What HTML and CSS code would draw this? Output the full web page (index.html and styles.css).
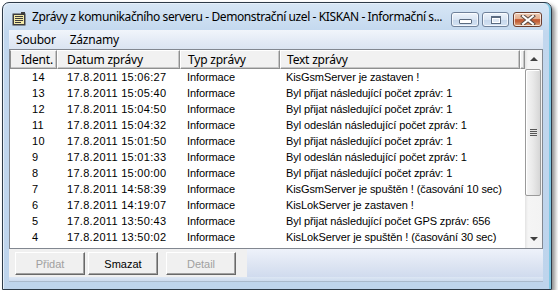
FILE: index.html
```html
<!DOCTYPE html>
<html>
<head>
<meta charset="UTF-8">
<title>Zprávy z komunikačního serveru</title>
<link rel="stylesheet" href="styles.css">
</head>
<body>
	<div class="window">
		<div class="titlebar">
			<svg class="app-icon" width="14" height="14" viewBox="0 0 14 14">
				<rect x="0.5" y="1.5" width="13" height="12" fill="#3d3d3d"/>
				<rect x="2" y="3" width="10" height="9" fill="#f3e9a6"/>
				<rect x="3" y="4" width="8" height="1" fill="#3d3d3d"/>
				<rect x="3" y="6" width="8" height="1" fill="#3d3d3d"/>
				<rect x="3" y="8" width="8" height="1" fill="#3d3d3d"/>
				<rect x="3" y="10" width="6" height="1" fill="#3d3d3d"/>
				<rect x="9" y="0" width="4" height="2" fill="#3d3d3d"/>
			</svg>
			<span class="title">Zprávy z komunikačního serveru - Demonstrační uzel - KISKAN - Informační s...</span>
			<div class="caption">
				<div class="cap-btn cap-min"><span class="min-glyph"></span></div>
				<div class="cap-btn cap-max"><span class="max-glyph"></span></div>
				<div class="cap-btn cap-close">
					<svg width="16" height="10" viewBox="0 0 16 10">
						<path d="M3 1 L13 9 M13 1 L3 9" stroke="#5a4a44" stroke-width="4" stroke-linecap="square"/>
						<path d="M3 1 L13 9 M13 1 L3 9" stroke="#ffffff" stroke-width="2" stroke-linecap="square"/>
					</svg>
				</div>
			</div>
		</div>

		<div class="client">
			<div class="menubar">
				<span class="menu-item">Soubor</span>
				<span class="menu-item">Záznamy</span>
			</div>

			<div class="listview">
				<div class="lv-main">
					<div class="lv-header">
						<div class="hcell c-id">Ident.</div>
						<div class="hcell c-date">Datum zprávy</div>
						<div class="hcell c-type">Typ zprávy</div>
						<div class="hcell c-text">Text zprávy</div>
						<div class="hcell c-fill"></div>
					</div>
					<div class="lv-rows">
						<div class="row"><span class="c-id">14</span><span class="c-date">17.8.2011 15:06:27</span><span class="c-type">Informace</span><span class="c-text">KisGsmServer je zastaven !</span></div>
						<div class="row"><span class="c-id">13</span><span class="c-date">17.8.2011 15:05:40</span><span class="c-type">Informace</span><span class="c-text">Byl přijat následující počet zpráv: 1</span></div>
						<div class="row"><span class="c-id">12</span><span class="c-date">17.8.2011 15:04:50</span><span class="c-type">Informace</span><span class="c-text">Byl přijat následující počet zpráv: 1</span></div>
						<div class="row"><span class="c-id">11</span><span class="c-date">17.8.2011 15:04:32</span><span class="c-type">Informace</span><span class="c-text">Byl odeslán následující počet zpráv: 1</span></div>
						<div class="row"><span class="c-id">10</span><span class="c-date">17.8.2011 15:01:50</span><span class="c-type">Informace</span><span class="c-text">Byl přijat následující počet zpráv: 1</span></div>
						<div class="row"><span class="c-id">9</span><span class="c-date">17.8.2011 15:01:33</span><span class="c-type">Informace</span><span class="c-text">Byl odeslán následující počet zpráv: 1</span></div>
						<div class="row"><span class="c-id">8</span><span class="c-date">17.8.2011 15:00:00</span><span class="c-type">Informace</span><span class="c-text">Byl přijat následující počet zpráv: 1</span></div>
						<div class="row"><span class="c-id">7</span><span class="c-date">17.8.2011 14:58:39</span><span class="c-type">Informace</span><span class="c-text">KisGsmServer je spuštěn ! (časování 10 sec)</span></div>
						<div class="row"><span class="c-id">6</span><span class="c-date">17.8.2011 14:19:07</span><span class="c-type">Informace</span><span class="c-text">KisLokServer je zastaven !</span></div>
						<div class="row"><span class="c-id">5</span><span class="c-date">17.8.2011 13:50:43</span><span class="c-type">Informace</span><span class="c-text">Byl přijat následující počet GPS zpráv: 656</span></div>
						<div class="row"><span class="c-id">4</span><span class="c-date">17.8.2011 13:50:02</span><span class="c-type">Informace</span><span class="c-text">KisLokServer je spuštěn ! (časování 30 sec)</span></div>
					</div>
				</div>
				<div class="scrollbar">
					<div class="sb-btn"><span class="arrow-up"></span></div>
					<div class="sb-track">
						<div class="sb-thumb">
							<span class="grip"></span>
						</div>
					</div>
					<div class="sb-btn"><span class="arrow-down"></span></div>
				</div>
			</div>

			<div class="toolbar">
				<button class="btn" disabled>Přidat</button>
				<button class="btn">Smazat</button>
				<button class="btn btn-gap" disabled>Detail</button>
				<div class="toolbar-fill"></div>
			</div>
			<div class="status-strip"></div>
		</div>
	</div>
</body>
</html>
```

FILE: styles.css
```css
/* okno */
body {
	margin: 0;
	background: #ffffff;
}

.window {
	box-sizing: border-box;
	width: 550px;
	height: 288px;
	margin: 2px 0 0 2px;
	padding: 0 8px 7px 6px;
	display: flex;
	flex-direction: column;
	border: 1px solid #2d3a48;
	border-radius: 7px 7px 0 0;
	background: linear-gradient(#d7e6f5, #c2d7ee 30px, #bed4ec);
	box-shadow: inset -2px 0 0 #7fc7e3, inset 1px 1px 0 #e6f0fa, 3px 3px 4px rgba(0, 0, 0, 0.45);
}

/* titulek */
.titlebar {
	height: 27px;
	display: flex;
	align-items: flex-start;
	padding: 0 1px 0 3px;
}

.app-icon {
	margin-top: 9px;
	margin-right: 6px;
	flex: none;
}

.title {
	flex: 1;
	margin-top: 6px;
	font-family: "Noto Sans", sans-serif;
	font-size: 12px;
	line-height: 16px;
	color: #000000;
	white-space: nowrap;
	overflow: hidden;
	letter-spacing: -0.4px;
}

.caption {
	display: flex;
	margin-top: 9px;
}

.cap-btn {
	box-sizing: border-box;
	height: 15px;
	border: 1px solid #6f819a;
	border-radius: 3px;
	display: flex;
	align-items: center;
	justify-content: center;
	background: linear-gradient(#eef4fb, #d9e5f3 50%, #c6d7ec 51%, #d3e2f3);
	box-shadow: inset 0 0 0 1px rgba(255, 255, 255, 0.7);
}

.cap-min {
	width: 28px;
	margin-right: 3px;
}

.cap-max {
	width: 27px;
	margin-right: 4px;
}

.cap-close {
	width: 29px;
	border-color: #6b3d2e;
	background: linear-gradient(#eecbb4, #e2ae8e 45%, #c9633c 50%, #bf5a34 62%, #e0a97e);
}

.min-glyph {
	width: 11px;
	height: 3px;
	margin-top: 4px;
	background: #ffffff;
	border: 1px solid #5b6b80;
	border-radius: 1px;
}

.max-glyph {
	width: 8px;
	height: 5px;
	border: 1px solid #5b6b80;
	border-top-width: 2px;
	background: #dfe8f3;
	box-shadow: inset 0 0 0 1px #ffffff;
}

/* obsah okna */
.client {
	flex: 1;
	display: flex;
	flex-direction: column;
	background: #f0f0f0;
}

.menubar {
	height: 19px;
	display: flex;
	align-items: center;
	padding-left: 7px;
	background: linear-gradient(#f1f5fb, #e3eaf5 60%, #dbe4f1);
	font-family: "Noto Sans", sans-serif;
	font-size: 12px;
	letter-spacing: -0.2px;
}

.menu-item {
	margin-right: 14px;
}

/* seznam zprav */
.listview {
	height: 200px;
	box-sizing: border-box;
	display: flex;
	border: 1px solid #828790;
	background: #ffffff;
}

.lv-main {
	flex: 1;
	display: flex;
	flex-direction: column;
}

.lv-header {
	height: 19px;
	display: flex;
}

.hcell {
	box-sizing: border-box;
	height: 19px;
	padding-top: 1px;
	background: #f1f1f1;
	border: 1px solid #8e8f8f;
	border-left-color: #ffffff;
	border-top-color: #ffffff;
	box-shadow: inset -1px -1px 0 #c6c6c6;
	font-family: "Noto Sans", sans-serif;
	font-size: 12px;
	line-height: 15px;
	letter-spacing: -0.2px;
	white-space: nowrap;
	overflow: hidden;
}

.lv-header .c-id { width: 47px; padding-left: 10px; border-left: 1px solid #8e8f8f; }
.lv-header .c-date { width: 123px; padding-left: 9px; }
.lv-header .c-type { width: 100px; padding-left: 7px; }
.lv-header .c-text { width: 240px; padding-left: 6px; }
.lv-header .c-fill { width: 5px; }

.row {
	height: 16px;
	display: flex;
	font-family: "Liberation Sans", Arial, sans-serif;
	font-size: 11px;
	line-height: 16px;
	letter-spacing: -0.1px;
	color: #000000;
	white-space: nowrap;
}

.row span {
	overflow: hidden;
}

.row .c-id { width: 47px; padding-left: 22px; box-sizing: border-box; letter-spacing: 0.3px; }
.row .c-date { width: 123px; padding-left: 10px; box-sizing: border-box; letter-spacing: 0.3px; }
.row .c-type { width: 100px; padding-left: 7px; box-sizing: border-box; }
.row .c-text { width: 240px; padding-left: 6px; box-sizing: border-box; }

/* posuvnik */
.scrollbar {
	width: 17px;
	display: flex;
	flex-direction: column;
	background: linear-gradient(90deg, #e3e3e3, #f5f5f5 3px, #f3f3f3);
}

.sb-btn {
	height: 18px;
	display: flex;
	align-items: center;
	justify-content: center;
}

.arrow-up {
	width: 0;
	height: 0;
	border-left: 4px solid transparent;
	border-right: 4px solid transparent;
	border-bottom: 4px solid #404040;
}

.arrow-down {
	width: 0;
	height: 0;
	border-left: 4px solid transparent;
	border-right: 4px solid transparent;
	border-top: 4px solid #404040;
}

.sb-track {
	flex: 1;
}

.sb-thumb {
	box-sizing: border-box;
	height: 127px;
	margin: 1px 1px 0 0;
	border: 1px solid #9a9a9a;
	border-radius: 2px;
	background: linear-gradient(90deg, #f6f6f6, #e9e9e9 50%, #d6d6d6);
	box-shadow: inset 1px 1px 0 #ffffff;
	display: flex;
	align-items: center;
	justify-content: center;
}

.grip {
	width: 7px;
	height: 7px;
	background: repeating-linear-gradient(#555555 0, #555555 1px, #e4e4e4 1px, #e4e4e4 2px);
}

/* tlacitka */
.toolbar {
	height: 28px;
	display: flex;
	align-items: flex-start;
	padding: 3px 0 0 6px;
	box-sizing: border-box;
}

.btn {
	width: 70px;
	height: 23px;
	margin-right: 3px;
	padding: 0;
	background: #f0f0f0;
	border: 1px solid;
	border-color: #ffffff #696969 #696969 #ffffff;
	box-shadow: inset -1px -1px 0 #a0a0a0;
	font-family: "Liberation Sans", Arial, sans-serif;
	font-size: 11px;
	font-weight: normal;
	color: #000000;
}

.btn:disabled {
	color: #a0a0a0;
}

.btn-gap {
	margin-left: 5px;
}

.toolbar-fill {
	flex: 1;
	align-self: stretch;
	margin: -3px 0 0 8px;
	background: linear-gradient(#eef2fa, #dfe6f3 50%, #d0dbee);
}

.status-strip {
	flex: 1;
	background: linear-gradient(#dde7f4, #ccdaee);
	border-bottom: 1px solid #a9b9cc;
}
```
